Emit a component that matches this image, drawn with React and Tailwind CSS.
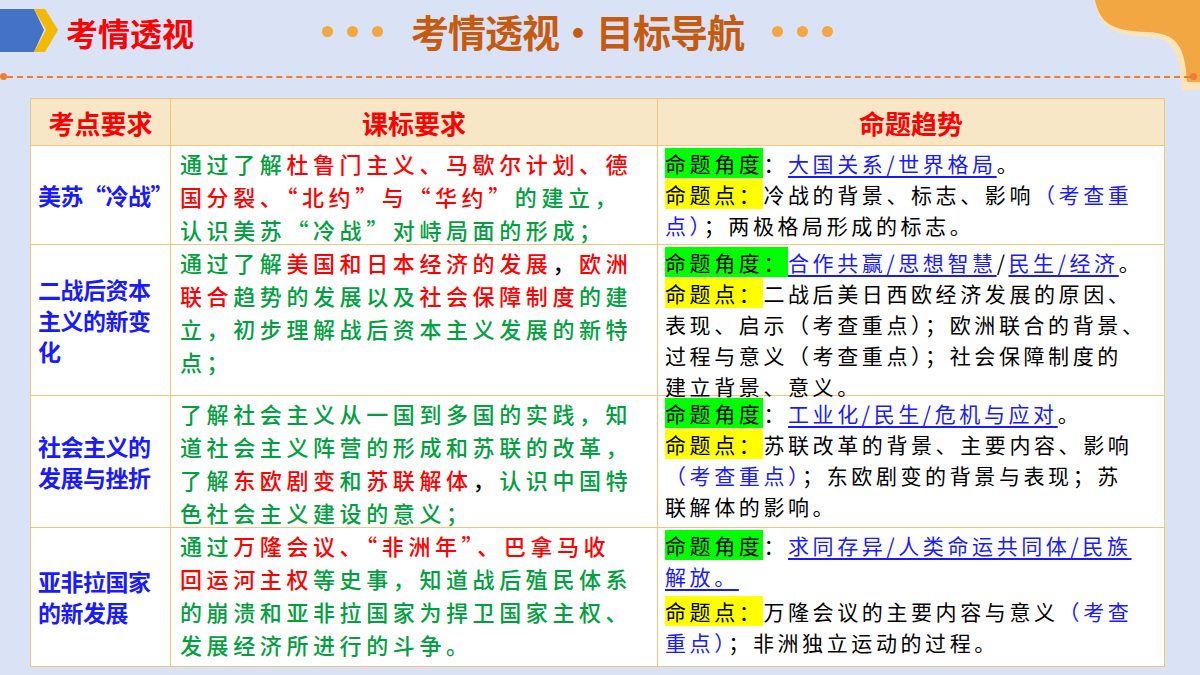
import React from "react";

const R = ({ children }) => <span className="text-[#ff0000]">{children}</span>;
const B = ({ children }) => <span className="text-black">{children}</span>;
const Blue = ({ children }) => <span className="text-[#1a1aff]">{children}</span>;
const U = ({ children }) => <span className="text-[#1a1aff] underline underline-offset-4">{children}</span>;
const G = ({ children }) => <span className="bg-[#00ff00]">{children}</span>;
const Y = ({ children }) => <span className="bg-[#ffff00]">{children}</span>;

const rows = [
  {
    h: "h-[99px]",
    topic: <>美苏“冷战”</>,
    req: (
      <>
        通过了解<R>杜鲁门主义、马歇尔计划、德<br />国分裂、“北约”与“华约”</R>的建立，<br />认识美苏“冷战”对峙局面的形成；
      </>
    ),
    trend: (
      <>
        <G>命题角度</G>：<U>大国关系/世界格局</U>。<br />
        <Y>命题点：</Y>冷战的背景、标志、影响<Blue>（考查重<br />点）</Blue>；两极格局形成的标志。
      </>
    ),
  },
  {
    h: "h-[151px]",
    topic: <>二战后资本<br />主义的新变<br />化</>,
    req: (
      <>
        通过了解<R>美国和日本经济的发展</R><B>，</B><R>欧洲<br />联合</R>趋势的发展以及<R>社会保障制度</R>的建<br />立，初步理解战后资本主义发展的新特<br />点；
      </>
    ),
    trend: (
      <>
        <G>命题角度：</G><U>合作共赢/思想智慧</U>/<U>民生/经济</U>。<br />
        <Y>命题点：</Y>二战后美日西欧经济发展的原因、<br />表现、启示（考查重点）；欧洲联合的背景、<br />过程与意义（考查重点）；社会保障制度的<br />建立背景、意义。
      </>
    ),
  },
  {
    h: "h-[132px]",
    topic: <>社会主义的<br />发展与挫折</>,
    req: (
      <>
        了解社会主义从一国到多国的实践，知<br />道社会主义阵营的形成和苏联的改革，<br />了解<R>东欧剧变</R>和<R>苏联解体</R><B>，</B>认识中国特<br />色社会主义建设的意义；
      </>
    ),
    trend: (
      <>
        <G>命题角度</G>：<U>工业化/民生/危机与应对</U>。<br />
        <Y>命题点：</Y>苏联改革的背景、主要内容、影响<br /><Blue>（考查重点）</Blue>；东欧剧变的背景与表现；苏<br />联解体的影响。
      </>
    ),
  },
  {
    h: "h-[138px]",
    topic: <>亚非拉国家<br />的新发展</>,
    req: (
      <>
        通过<R>万隆会议、“非洲年”、巴拿马收<br />回运河主权</R>等史事，知道战后殖民体系<br />的崩溃和亚非拉国家为捍卫国家主权、<br />发展经济所进行的斗争。
      </>
    ),
    trend: (
      <>
        <G>命题角度</G>：<U>求同存异/人类命运共同体/民族<br />解放。</U><br />
        <span className="block h-[4px]" />
        <Y>命题点：</Y>万隆会议的主要内容与意义<Blue>（考查<br />重点）</Blue>；非洲独立运动的过程。
      </>
    ),
  },
];

export default function App() {
  const sans = { fontFamily: '"Noto Sans CJK SC", sans-serif' };
  return (
    <div className="w-[1200px] h-[675px] bg-[#dae3f5] relative overflow-hidden" style={sans}>
      {/* top right wave */}
      <svg className="absolute right-0 top-0" width="105" height="90" viewBox="0 0 105 90">
        <path d="M0 0 C4 28 18 36 55 37 C78 38 85 52 87 90 L105 90 L105 0 Z" fill="#fde3b8" />
        <path d="M0 0 C5 24 18 31 52 32 C82 33 90 46 92 82 L105 82 L105 0 Z" fill="#f2a742" />
      </svg>

      {/* header */}
      <div className="flex items-center h-[62px]">
        <svg width="66" height="50" viewBox="0 0 66 50" className="mt-[2px]">
          <path d="M0 7 H34 L44 28 L34 50 H0 Z" fill="#4472c4" transform="translate(0,-5)" />
          <path d="M34 2 H45 L58 23 L45 45 H34 L46 23 Z" fill="#f4b800" />
        </svg>
        <div className="text-[32px] font-bold text-[#ff0000] ml-[0px] mt-[2px]">考情透视</div>
        <div className="flex items-center ml-[128px]">
          <div className="flex gap-[14px]">
            <span className="w-[11px] h-[11px] rounded-full bg-[#f2a742]" />
            <span className="w-[11px] h-[11px] rounded-full bg-[#f2a742]" />
            <span className="w-[11px] h-[11px] rounded-full bg-[#f2a742]" />
          </div>
          <div className="text-[38px] font-bold text-[#c55a11] ml-[28px] leading-none tracking-[-1px]">考情透视•目标导航</div>
          <div className="flex gap-[14px] ml-[28px]">
            <span className="w-[11px] h-[11px] rounded-full bg-[#f2a742]" />
            <span className="w-[11px] h-[11px] rounded-full bg-[#f2a742]" />
            <span className="w-[11px] h-[11px] rounded-full bg-[#f2a742]" />
          </div>
        </div>
      </div>
      <div className="flex items-center mt-[11px] relative">
        <span className="w-[7px] h-[7px] rounded-full bg-[#ed7d31] shrink-0" />
        <div className="flex-1 border-t-2 border-dashed border-[#ed7d31]" />
        <span className="w-[7px] h-[7px] rounded-full bg-[#ed7d31] shrink-0 mr-[3px]" />
      </div>

      {/* table */}
      <div className="mx-[30px] mt-[18px] w-[1135px] border border-[#f0c77a]">
        <div className="flex h-[47px] bg-[#f7e7c6] text-[#ff0000] text-[26px] font-bold border-b border-[#f0c77a]">
          <div className="w-[140px] flex items-center justify-center border-r border-[#f0c77a]">考点要求</div>
          <div className="w-[487px] flex items-center justify-center border-r border-[#f0c77a]">课标要求</div>
          <div className="flex-1 flex items-center justify-center">命题趋势</div>
        </div>
        {rows.map((r, i) => (
          <div key={i} className={`flex bg-white ${r.h} ${i < rows.length - 1 ? "border-b border-[#f0c77a]" : ""}`}>
            <div className="w-[140px] shrink-0 flex items-center px-[7px] border-r border-[#f0c77a] text-[#1a1aff] font-bold text-[23px] leading-[31px] whitespace-nowrap tracking-[-0.5px]">
              {r.topic}
            </div>
            <div className="w-[487px] shrink-0 px-[9px] pt-[1px] border-r border-[#f0c77a] text-[#00a040] text-[22px] leading-[33px] tracking-[4.6px] font-medium whitespace-nowrap">
              {r.req}
            </div>
            <div className="flex-1 px-[7px] pt-[2px] text-black text-[21px] leading-[31px] tracking-[3.6px] whitespace-nowrap">
              {r.trend}
            </div>
          </div>
        ))}
      </div>
    </div>
  );
}
